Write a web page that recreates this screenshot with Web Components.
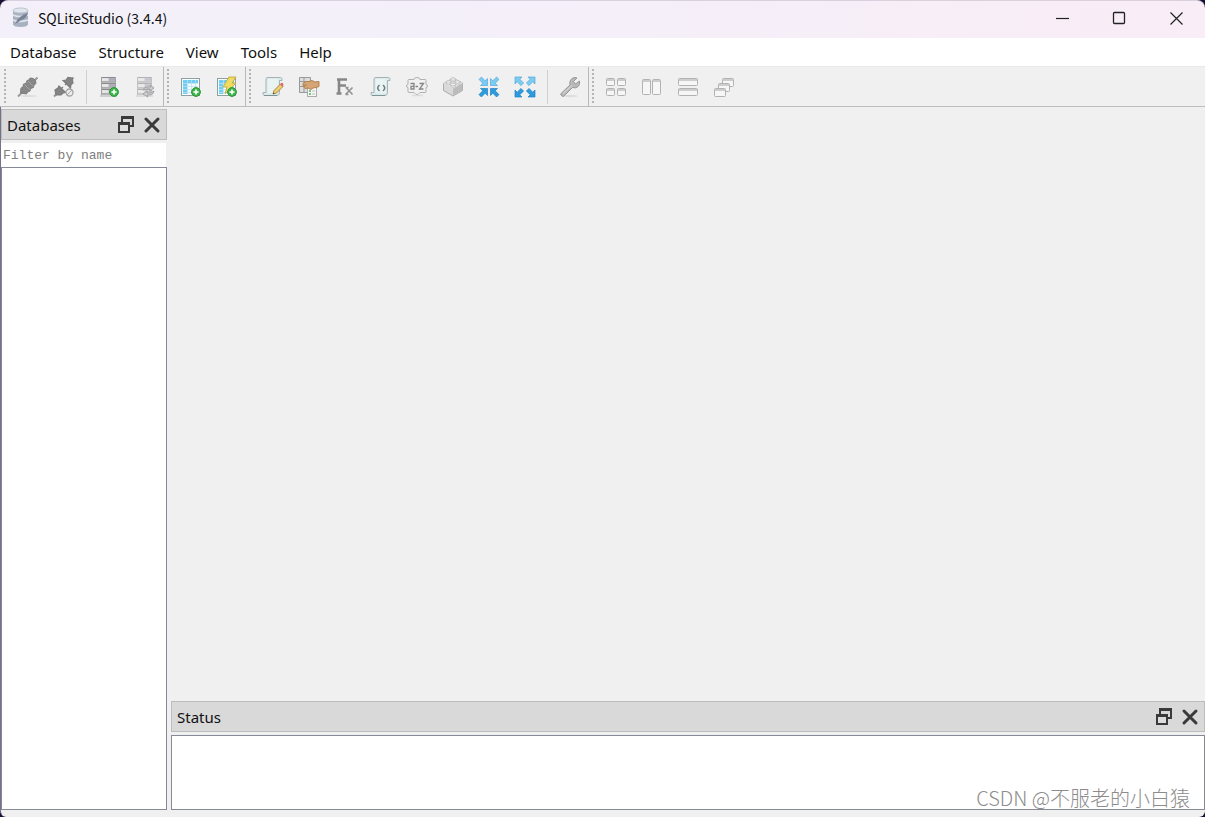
<!DOCTYPE html>
<html lang="en">
<head>
<meta charset="utf-8">
<title>SQLiteStudio (3.4.4)</title>
<style>
html,body{margin:0;height:100%}
body{background:#171033;font-family:"Noto Sans CJK SC","Noto Sans",sans-serif;color:#111;overflow:hidden;--ui-font:"Noto Sans","Noto Sans CJK SC",sans-serif}
</style>
</head>
<body>
<studio-window></studio-window>
<script>
const svg=(body,size=22)=>`<svg width="${size}" height="${size}" viewBox="0 0 ${size} ${size}" aria-hidden="true">${body}</svg>`;
const plus=(x,y)=>`<circle cx="${x}" cy="${y}" r="4.4" fill="#3fb54a" stroke="#2b9438"/><path d="M${x-2.6} ${y}h5.2M${x} ${y-2.6}v5.2" stroke="#fff" stroke-width="1.6"/>`;
const shelf=y=>`<path d="M3 ${y}h15v5.500h-15z" fill="#cfcfd2"/><path d="M3 ${y+.5}h15" stroke="#8a8a8a"/><path d="M11 ${y+2.5}h6" stroke="#a9a9bb" stroke-width="2.500"/><path d="M4 ${y+2.5}h6" stroke="#e9e9e9" stroke-width="2.500"/><path d="M3 ${y+5}h15" stroke="#8d8d8d"/>`;
const server=(o)=>`<g opacity="${o}">${shelf(1)}${shelf(7)}${shelf(13)}<path d="M3.500 1v18M17.500 1v18" stroke="#a2a2a2"/><path d="M2 20h17" stroke="#c4c4c4" stroke-width="1.500"/></g>`;
const table=`<rect x="1.500" y="2.500" width="18" height="17" fill="#f7fcff" stroke="#8fa0a2"/><path d="M3 4h15v3H3zM3 7h4v11H3z" fill="#6dcff5"/><path d="M3 7.500h15M3 10.500h15M3 13.500h15M3 16.500h15M7.500 4v14M11.500 4v14M15.500 4v14" stroke="#b9e0ef" stroke-width=".8"/>`;
const sheet=`<path d="M5 1.500h13.500q2 0 1.500 3h-2.500v12q0 3-2.500 3H2.500q-2 0-1.500-3h3V4q0-2.500 1-2.500z" fill="#dcebea" stroke="#a3b4b6"/><path d="M6 3h10v14H5.500z" fill="#e8f3f2"/><path d="M2 19.500h13" stroke="#7c9396"/>`;
const arrow=(r,f,s)=>`<path transform="rotate(${r} 11 11)" d="M9.500 9.500H2.500L4.800 7.200 1 3.400 3.400 1l3.800 3.800L9.500 2.500z" fill="${f}" stroke="${s}" stroke-width=".7"/>`;
const arrowOut=(r,f,s)=>`<path transform="rotate(${r} 11 11)" d="M1 1h7L5.800 3.200 9.600 7 7 9.600 3.200 5.800 1 8z" fill="${f}" stroke="${s}" stroke-width=".7"/>`;
const four=(a)=>a(0,'#7bcbf3','#55a9da')+a(90,'#7bcbf3','#55a9da')+a(180,'#2c9ade','#2483c0')+a(270,'#2c9ade','#2483c0');
const pane=(x,y,w,h)=>`<rect x="${x}" y="${y}" width="${w}" height="${h}" rx="1" fill="#f6f6f6" stroke="#b2b2b2"/><path d="M${x+.5} ${y+1.5}h${w-1}" stroke="#cdcdcd" stroke-width="2"/>`;
const ICONS={
 connect:svg('<ellipse cx="12" cy="20" rx="8" ry="1" fill="#ddd"/><path d="M1 20.500l5-5M16 6l4.500-4.500" stroke="#9a9a9a" stroke-width="2"/><path d="M3.500 17l.5-5 2-1 .5-3 2.500-.5 1-3 2-.5 1-2 3.500.5 2 2 .5 3-2 1.500-.5 2.500-3 1-.5 2.500-2.500 1-1 2z" fill="#878787" stroke="#7c7c7c"/><path d="M7.500 8.500l6 6M11 5l5.500 5.500" stroke="#a5a5a5"/>'),
 disconnect:svg('<path d="M1 20.500l4-4M18 4l2.500-2.500" stroke="#999" stroke-width="2"/><path d="M3 19l-1-5 3-2 1-2 6.500 6.500-2.500.5-2 2zM10 4.500l3-.5 2-2.500 4 .5 1 5-2 1.500-.5 3.500zM8 13l2-2M12 9l2-2" fill="#848484" stroke="#7b7b7b" stroke-width="1.200"/><circle cx="16.500" cy="16.500" r="3.500" fill="#eee" stroke="#a2a2a2" stroke-width="1.300"/><path d="M14 19l5-5" stroke="#a2a2a2"/>'),
 addDb:svg(server(1)+plus(16,16)),
 editDb:svg(server(.6)+'<path d="M9 14q1-3 4-3h4l-1-2 4 3-4 3v-2h-3zM20 15q-1 4-4 4h-3l1 2-5-3 4-3v2h3z" fill="#d0d0d0" stroke="#a2a2a2"/>'),
 newTable:svg(table+plus(16,16)),
 newView:svg(table+'<path d="M13 1h7l-4 6h4L9 18l2-7H7z" fill="#f1dc62" stroke="#c4ad45"/>'+plus(16,16)),
 editor:svg(sheet+'<path d="M11 18l1-3.500L18.500 8l2.500 2.500-6.500 6.500z" fill="#efcd68" stroke="#a98c50"/><path d="M18 8.500l1-1.500q2-1 2.500 1.500L20.500 11z" fill="#e06a69"/><path d="M11 18l1.500-.5-1-1z" fill="#333"/>'),
 history:svg('<path d="M1.500 1.500h11v15h-11z" fill="#dedede" stroke="#999"/><path d="M2 5.500h10M2 10.500h10M6 2v14" stroke="#999"/><rect x="9.500" y="10.500" width="9" height="10" fill="#f7f7f5" stroke="#aaa"/><path d="M11 15h2M11 18h2" stroke="#4bb367" stroke-width="1.500"/><path d="M14 15h3M14 18h3" stroke="#bbb"/><path d="M5 7.500q3-3 6-2l3-1 3 1.500 4-.5v5l-3 1-3 .5-2 1.500-3-1.500-3 .5-1.500-2 3-1.500-3.500.5z" fill="#d6a574" stroke="#b1814f"/>'),
 functions:svg('<path d="M3 3.500h10M5 3v14M5 9.500h7M2.500 17.500h5" fill="none" stroke="#868686" stroke-width="2.600"/><path d="M12 11.500l6.500 7M18.500 11.500l-7 7M11.500 11.500h3M11.500 18.500h3" fill="none" stroke="#929292" stroke-width="1.600"/>'),
 snippets:svg(sheet+'<path d="M9.500 9Q6 12 9.500 15M13 9q3.500 3 0 6" fill="none" stroke="#6d8084" stroke-width="1.600"/>'),
 collations:svg('<path d="M3 3.500h5q0-2 3-2t3 2h5q1 0 1 1v4q1.500 0 1.500 1.500T20 11.500v4q0 1-1 1h-5l-2 2h-2l-2-2H3q-1 0-1-1v-4Q.5 11.500.5 10T2 8.500v-4q0-1 1-1z" fill="#f0f0f0" stroke="#b0b0b0"/><path d="M4.500 7.500H8V13H5v-2.700h3M9.500 10.500h2.500M13.500 7.500h4l-4 5.500h4" fill="none" stroke="#858585" stroke-width="1.300"/><path d="M6 19.500h11" stroke="#ddd" stroke-width="1.500"/>'),
 extensions:svg('<path d="M1.500 7.500L11 2l9.500 5v7.500L11 20l-9.500-5.500z" fill="#d9d9d9" stroke="#aaa"/><path d="M11 12.500l9.500-5.500v7.500L11 20z" fill="#bcbcbc"/><path d="M1.500 7.500L11 2l9.500 5-9.500 5.500z" fill="#e8e8e8"/><g fill="#ededed" stroke="#bdbdbd" stroke-width=".8"><path d="M8.500 3v2q2.500 2 5 0V3zM4 6v2q2.500 2 5 0V6zM13 6v2q2.500 2 5 0V6zM8.500 8.500v2q2.500 2 5 0v-2z"/><ellipse cx="11" cy="3" rx="2.500" ry="1.300"/><ellipse cx="6.500" cy="6" rx="2.500" ry="1.300"/><ellipse cx="15.500" cy="6" rx="2.500" ry="1.300"/><ellipse cx="11" cy="8.500" rx="2.500" ry="1.300"/></g>'),
 collapse:svg(four(arrow)),
 expand:svg(four(arrowOut)),
 settings:svg('<ellipse cx="11" cy="20" rx="8" ry="1.200" fill="#ddd"/><path d="M1.500 18L11 9Q10 4 14 2q2-1 4 0l-3.500 3.500 2 2.500L20.500 5q1 4-2 6-2 1.500-5 .5L4.500 20.500q-2 0-3-2.500z" fill="#b9b9b9" stroke="#979797"/><path d="M4 17.500l9-8" stroke="#ddd"/>'),
 tile:svg(pane(1.5,2.5,8,7)+pane(12.5,2.5,8,7)+pane(1.5,12.5,8,7)+pane(12.5,12.5,8,7)),
 columns:svg(pane(1.5,3.5,8,15)+pane(11.5,3.5,8,15)),
 rows:svg(pane(1.5,2.5,19,7)+pane(1.5,12.5,19,7)),
 cascade:svg(pane(9.5,2.5,11,8)+pane(5.5,7.5,11,8)+pane(1.5,12.5,11,8)),
 app:svg('<path d="M2 3.500v14Q3 20 9.500 20T17 17.500v-14z" fill="#a7b1bf"/><path d="M2 8q6 3 15 0M2 13q6 3 15 0" fill="none" stroke="#dfe4ea" stroke-width="1.500"/><ellipse cx="9.500" cy="3.500" rx="7.500" ry="2.500" fill="#e0e6ec" stroke="#bcc3cc"/><path d="M4 17q3-8 13-11-2 6-7 7-2 2-6 4z" fill="#778295"/>'),
 minimize:svg('<path d="M4 11.500h13" stroke="#222" stroke-width="1.200"/>'),
 maximize:svg('<rect x="4.500" y="5.500" width="11" height="11" rx="1" fill="none" stroke="#222" stroke-width="1.300"/>'),
 close:svg('<path d="M4.500 5.500l12 12M16.500 5.500l-12 12" stroke="#222" stroke-width="1.200"/>'),
 float:svg('<path d="M7 8V3h11v9h-3" fill="none" stroke="#3a3a3a" stroke-width="2"/><path d="M6 3.500h13" stroke="#3a3a3a" stroke-width="3"/><rect x="4" y="9" width="10" height="9" fill="#ddd" stroke="#3a3a3a" stroke-width="2"/><path d="M3 9.500h12" stroke="#3a3a3a" stroke-width="3"/>'),
 dismiss:svg('<path d="M5 5l12 12M17 5L5 17" stroke="#3a3a3a" stroke-width="3" stroke-linecap="round"/>')
};
const define=(name,render)=>customElements.define(name,class extends HTMLElement{
 connectedCallback(){
  if(this.shadowRoot)return;
  const t=document.createElement('template');t.innerHTML=render(this);
  this.attachShadow({mode:'open'}).append(t.content.cloneNode(true));
 }
});
define('icon-button',el=>`<style>
:host{display:block;width:36px;height:36px}
button{display:grid;place-items:center;width:100%;height:100%;padding:0;border:0;background:none}
svg{display:block}
</style><button type="button" aria-label="${el.getAttribute('label')}">${ICONS[el.getAttribute('icon')]}</button>`);
define('title-bar',()=>`<style>
:host{display:flex;align-items:center;height:38px;box-sizing:border-box;padding:0 0 4px 11px;border-top:1px solid #d9d1de;border-radius:8px 8px 0 0;background:linear-gradient(90deg,#f3f0f9 0 30%,#f9edf7);font-size:14px}
svg{display:block;margin-right:5px}
.name{flex:1}
icon-button{width:57px}
</style>${ICONS.app}<span class="name"><slot></slot></span>
<icon-button icon="minimize" label="Minimize"></icon-button><icon-button icon="maximize" label="Maximize"></icon-button><icon-button icon="close" label="Close"></icon-button>`);
define('menu-bar',()=>`<style>
:host{display:flex;gap:2px;height:28px;background:#fff;font:15px var(--ui-font)}
</style><slot></slot>`);
define('menu-item',()=>`<style>
:host{display:block}
button{height:28px;padding:0 10px;border:0;background:none;font:inherit;color:inherit}
</style><button type="button"><slot></slot></button>`);
define('tool-bar',()=>`<style>
:host{display:flex;height:41px;box-sizing:border-box;padding-left:1px;background:#f0f0f0;border-top:1px solid #e8e8e8;border-bottom:1px solid #bdbdbd}
</style><slot></slot>`);
define('tool-group',()=>`<style>
:host{display:flex;align-items:center;border-right:1px solid #b9b9b9}
:host(:last-child){border:0}
.grip{width:3px;height:36px;margin:0 3px;background:conic-gradient(from 0deg at 2px 2px,transparent 75%,#b4b4b4 0) 0 0/4px 4px}
</style><span class="grip"></span><slot></slot>`);
define('tool-separator',()=>`<style>
:host{display:block;width:1px;height:34px;margin:0 4px;background:#cfcfcf}
</style>`);
define('dock-panel',()=>`<style>
:host{display:flex;flex-direction:column;min-width:0;min-height:0}
header{display:flex;align-items:center;height:31px;box-sizing:border-box;flex:none;padding:0 1px 0 5px;border:1px solid #bdbdbd;background:#d9d9d9;font:15px var(--ui-font)}
h2{flex:1;margin:0;font:inherit}
icon-button{width:26px;height:28px}
</style><header><h2><slot name="title"></slot></h2><icon-button icon="float" label="Float"></icon-button><icon-button icon="dismiss" label="Close"></icon-button></header><slot></slot>`);
define('name-filter',()=>`<style>
:host{display:block;padding:3px 1px 0 0}
input{display:block;width:100%;height:24px;box-sizing:border-box;padding:0 2px;border:0;background:#fff;font:13px "Liberation Mono",monospace;outline:0}
input::placeholder{color:#808080;opacity:1}
</style><input type="text" aria-label="Filter by name" placeholder="Filter by name">`);
define('content-box',()=>`<style>
:host{display:block;flex:1;box-sizing:border-box;border:1px solid #858a96;background:#fff}
</style><slot></slot>`);
define('water-mark',()=>`<style>
:host{position:absolute;right:15px;bottom:5px;font-size:20px;line-height:29px;font-weight:300;color:#8c8c8c;white-space:nowrap;pointer-events:none}
</style><slot></slot>`);
define('studio-window',()=>`<style>
:host{display:flex;flex-direction:column;position:relative;height:100vh}
main{flex:1;min-height:0;display:grid;grid-template-columns:166px 1fr;column-gap:4px;box-sizing:border-box;padding:2px 0 7px;background:#f0f0f0;border-left:1px solid #77708c;border-radius:0 0 6px 6px}
.work{display:grid;grid-template-rows:1fr 109px;min-width:0}
.status content-box{margin-top:3px}
</style>
<title-bar>SQLiteStudio (3.4.4)</title-bar>
<menu-bar><menu-item>Database</menu-item><menu-item>Structure</menu-item><menu-item>View</menu-item><menu-item>Tools</menu-item><menu-item>Help</menu-item></menu-bar>
<tool-bar>
${[[['connect','Connect'],['disconnect','Disconnect'],0,['addDb','Add database'],['editDb','Edit database']],
[['newTable','Create table'],['newView','Create view']],
[['editor','SQL editor'],['history','DDL history'],['functions','Functions'],['snippets','Snippets'],['collations','Collations'],['extensions','Extensions'],['collapse','Collapse'],['expand','Expand'],0,['settings','Settings']],
[['tile','Tile windows'],['columns','Tile vertically'],['rows','Tile horizontally'],['cascade','Cascade windows']]].map(g=>'<tool-group>'+g.map(i=>i?`<icon-button icon="${i[0]}" label="${i[1]}"></icon-button>`:'<tool-separator></tool-separator>').join('')+'</tool-group>').join('')}
</tool-bar>
<main>
<dock-panel><span slot="title">Databases</span><name-filter></name-filter><content-box></content-box></dock-panel>
<div class="work"><div></div><dock-panel class="status"><span slot="title">Status</span><content-box></content-box></dock-panel></div>
</main>
<water-mark>CSDN @不服老的小白猿</water-mark>`);
</script>
</body>
</html>
